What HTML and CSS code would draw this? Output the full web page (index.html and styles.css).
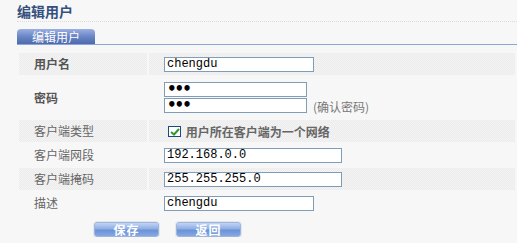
FILE: index.html
```html
<!DOCTYPE html>
<html>
<head>
	<title>编辑用户</title>
	<link rel="stylesheet" href="styles.css">
</head>
<body>
	<div class="page">
		<h1 class="title">编辑用户</h1>
		<div class="tabs">
			<span class="tab">编辑用户</span>
		</div>
		<table class="form">
			<tr class="shade r-22">
				<td class="label strong">用户名</td>
				<td class="value"><input type="text" class="w150" value="chengdu"></td>
			</tr>
			<tr class="r-43">
				<td class="label strong">密码</td>
				<td class="value">
					<input type="password" class="w143 pw" value="123"><br>
					<input type="password" class="w143 pw" value="123"><span class="hint">(确认密码)</span>
				</td>
			</tr>
			<tr class="shade r-22">
				<td class="label">客户端类型</td>
				<td class="value check">
					<span class="box"><svg width="10" height="8" viewBox="0 0 10 8"><path d="M1 4 L4 6.5 L9 1" fill="none" stroke="#2e9a2e" stroke-width="2"/></svg></span>
					<span class="check-text">用户所在客户端为一个网络</span>
				</td>
			</tr>
			<tr class="r-24">
				<td class="label">客户端网段</td>
				<td class="value"><input type="text" class="w178" value="192.168.0.0"></td>
			</tr>
			<tr class="shade r-22">
				<td class="label">客户端掩码</td>
				<td class="value"><input type="text" class="w178" value="255.255.255.0"></td>
			</tr>
			<tr class="r-24">
				<td class="label">描述</td>
				<td class="value"><input type="text" class="w150" value="chengdu"></td>
			</tr>
		</table>
		<div class="actions">
			<button class="btn">保存</button>
			<button class="btn">返回</button>
		</div>
	</div>
</body>
</html>
```

FILE: styles.css
```css
html, body {
	margin: 0;
	background: #f7f7f7;
	font-family: "Noto Sans CJK SC", "Liberation Sans", sans-serif;
	font-size: 12px;
	color: #666;
	overflow: hidden;
}

.page {
	padding-left: 17px;
}

.title {
	margin: 0;
	padding-top: 3px;
	height: 18px;
	line-height: 16px;
	font-size: 14px;
	font-weight: bold;
	color: #34507e;
	border-bottom: 1px dotted #dcdcdc;
}

.tabs {
	display: flex;
	margin-top: 7px;
	border-bottom: 1px solid #8fa5d7;
}

.tab {
	width: 78px;
	height: 15px;
	line-height: 15px;
	text-align: center;
	color: #fff;
	border-radius: 4px 4px 0 0;
	background: linear-gradient(#9cb0e2, #6a86c6 50%, #4d6aad);
}

.form {
	width: 100%;
	margin-top: 7px;
	border-collapse: separate;
	border-spacing: 2px 1px;
}

.form td {
	padding: 0;
	vertical-align: middle;
}

.shade td {
	background-color: #efefef;
	background-image: repeating-conic-gradient(#f4f4f4 0 25%, #ebebeb 0 50%);
	background-size: 2px 2px;
}

.r-22 td { height: 22px; }
.r-24 td { height: 24px; }
.r-43 td { height: 43px; }

.label {
	width: 113px;
	padding-left: 15px !important;
	line-height: 14px;
}

.label.strong {
	font-weight: bold;
	color: #555;
}

.value {
	padding-left: 15px !important;
	line-height: 0;
}

input[type="text"], input[type="password"] {
	box-sizing: border-box;
	height: 15px;
	margin: 0;
	padding: 0 2px;
	border: 1px solid #7f9db9;
	background: #fff;
	font-family: "Liberation Mono", monospace;
	font-size: 12px;
	line-height: 13px;
	color: #000;
	outline: none;
	vertical-align: top;
}

input.pw {
	font-family: "DejaVu Sans", sans-serif;
	font-size: 15px;
	font-weight: bold;
	letter-spacing: -2px;
	line-height: 13px;
}

input.pw + br + input.pw {
	margin-top: 1px;
}

.w150 { width: 150px; }
.w143 { width: 143px; }
.w178 { width: 178px; }

.hint {
	display: inline-block;
	margin-left: 6px;
	margin-top: 3px;
	line-height: 14px;
	vertical-align: top;
	color: #777;
}

.check {
	line-height: 14px;
}

.box {
	display: inline-flex;
	align-items: center;
	justify-content: center;
	box-sizing: border-box;
	width: 13px;
	height: 11px;
	margin-left: 4px;
	border: 1px solid #1c4a80;
	background: #fff;
	vertical-align: middle;
}

.check-text {
	margin-left: 2px;
	font-weight: bold;
	vertical-align: middle;
}

.actions {
	display: flex;
	gap: 17px;
	margin-top: 6px;
	padding-left: 77px;
}

.btn {
	width: 65px;
	height: 15px;
	padding: 0;
	border: 1px solid #9fb4d8;
	border-radius: 3px;
	background: linear-gradient(#c2d4f2, #8eaee6 45%, #6a92d6 55%, #86a8e2);
	color: #fff;
	font-family: "Noto Sans CJK SC", sans-serif;
	font-size: 12px;
	font-weight: bold;
	line-height: 13px;
	letter-spacing: 1px;
	box-shadow: 0 0 0 1px #e4e8ee;
}
```
